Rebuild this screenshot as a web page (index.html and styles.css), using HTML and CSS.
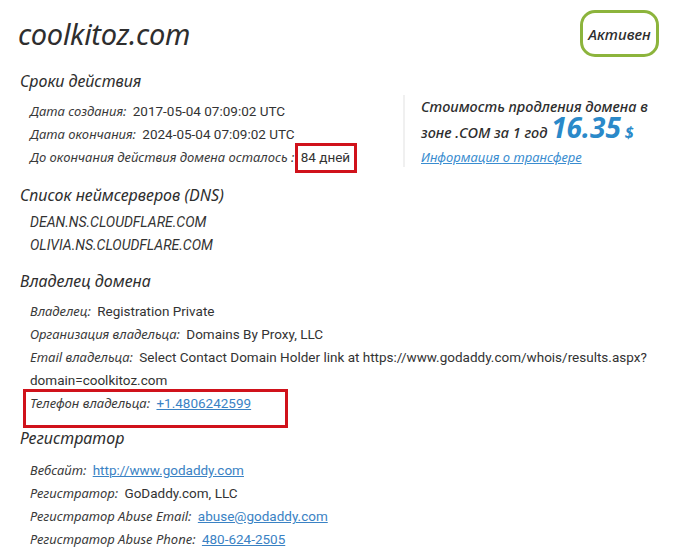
FILE: index.html
```html
<!DOCTYPE html>
<html lang="ru">
<head>
<meta charset="utf-8">
<title>coolkitoz.com</title>
<link rel="stylesheet" href="styles.css">
</head>
<body>
<div class="page">
  <header class="head">
    <h1 class="domain">coolkitoz.com</h1>
    <div class="status">Активен</div>
  </header>

  <section class="sec sec-dates">
    <h2 class="sec-title">Сроки действия</h2>
    <div class="split">
      <div class="rows">
        <div class="row"><span class="lbl">Дата создания:</span> <span class="val">2017-05-04 07:09:02 UTC</span></div>
        <div class="row"><span class="lbl">Дата окончания:</span> <span class="val">2024-05-04 07:09:02 UTC</span></div>
        <div class="row"><span class="lbl">До окончания действия домена осталось :</span> <span class="val hl">84 дней</span></div>
      </div>
      <aside class="price">
        <div class="price-line">Стоимость продления домена в</div>
        <div class="price-line price-line2">зоне .COM за 1 год <span class="amount">16.35</span> <span class="cur">$</span></div>
        <a class="price-link" href="#">Информация о трансфере</a>
      </aside>
    </div>
  </section>

  <section class="sec sec-dns">
    <h2 class="sec-title">Список неймсерверов (DNS)</h2>
    <div class="rows dns">
      <div class="row">DEAN.NS.CLOUDFLARE.COM</div>
      <div class="row">OLIVIA.NS.CLOUDFLARE.COM</div>
    </div>
  </section>

  <section class="sec sec-owner">
    <h2 class="sec-title">Владелец домена</h2>
    <div class="rows">
      <div class="row"><span class="lbl">Владелец:</span> <span class="val">Registration Private</span></div>
      <div class="row"><span class="lbl">Организация владельца:</span> <span class="val">Domains By Proxy, LLC</span></div>
      <div class="row"><span class="lbl">Email владельца:</span> <span class="val">Select Contact Domain Holder link at https://www.godaddy.com/whois/results.aspx?domain=coolkitoz.com</span></div>
      <div class="row row-hl"><span class="lbl">Телефон владельца:</span> <a class="val link" href="#">+1.4806242599</a></div>
    </div>
  </section>

  <section class="sec sec-reg">
    <h2 class="sec-title">Регистратор</h2>
    <div class="rows rows-reg">
      <div class="row"><span class="lbl">Вебсайт:</span> <a class="val link" href="#">http://www.godaddy.com</a></div>
      <div class="row"><span class="lbl">Регистратор:</span> <span class="val">GoDaddy.com, LLC</span></div>
      <div class="row"><span class="lbl">Регистратор Abuse Email:</span> <a class="val link" href="#">abuse@godaddy.com</a></div>
      <div class="row"><span class="lbl">Регистратор Abuse Phone:</span> <a class="val link" href="#">480-624-2505</a></div>
    </div>
  </section>
</div>
</body>
</html>
```

FILE: styles.css
```css
* { box-sizing: border-box; }
html, body { margin: 0; padding: 0; background: #fff; }
body {
  font-family: "Noto Sans", "Open Sans", sans-serif;
  color: #333;
  font-size: 13px;
}
.page { padding: 10px 20px 0 18px; }

.head {
  display: flex;
  justify-content: space-between;
  align-items: center;
  height: 47px;
}
.domain {
  margin: 0;
  font-size: 29px;
  font-style: italic;
  font-weight: 400;
  color: #2e2e2e;
  letter-spacing: -0.3px;
}
.status {
  width: 79px;
  height: 47px;
  border: 3px solid #8cb43c;
  border-radius: 15px;
  display: flex;
  align-items: center;
  justify-content: center;
  font-style: italic;
  font-weight: 500;
  font-size: 15px;
  color: #2e2e2e;
}

.sec-title {
  margin: 0 0 0 2px;
  font-size: 16px;
  line-height: 24px;
  font-style: italic;
  font-weight: 400;
  color: #2e2e2e;
}
.sec-dates { margin-top: 12px; }
.sec-dns { margin-top: 14px; }
.sec-owner { margin-top: 12px; }
.sec-reg { margin-top: 11px; }

.rows { padding: 7px 0 0 12px; }
.rows.rows-reg { padding-top: 9px; }
.rows.dns { padding-top: 4px; font-style: italic; font-size: 14px; font-family: Roboto, "Noto Sans", sans-serif; }
.row {
  line-height: 23px;
  position: relative;
}
.lbl { font-style: italic; color: #3a3a3a; margin-right: 3px; }
.val { color: #333; font-family: Roboto, "Noto Sans", sans-serif; font-size: 13.5px; }
.link { color: #3a82c4; text-decoration: underline; }

.hl { position: relative; }
.hl::after {
  content: "";
  position: absolute;
  left: -6px;
  right: -7px;
  top: -6px;
  bottom: -8px;
  border: 3px solid #d0121b;
}
.row-hl::after {
  content: "";
  position: absolute;
  left: -7px;
  top: -3px;
  width: 259px;
  height: 33px;
  border: 3px solid #d0121b;
}

.split {
  display: grid;
  grid-template-columns: 385px 1fr;
}
.price {
  margin-top: 2px;
  border-left: 2px solid #f0f0f0;
  padding-left: 16px;
  height: 72px;
}
.price-line {
  font-style: italic;
  font-size: 14.5px;
  font-weight: 500;
  color: #2e2e2e;
  line-height: 22px;
}
.price-line2 { line-height: 24px; }
.amount {
  font-size: 28px;
  font-weight: 700;
  color: #2a89c9;
  line-height: 20px;
}
.cur {
  font-size: 16px;
  font-weight: 700;
  color: #2a89c9;
}
.price-link {
  display: block;
  font-style: italic;
  font-size: 13px;
  line-height: 26px;
  color: #3a8dd0;
  text-decoration: underline;
}
```
